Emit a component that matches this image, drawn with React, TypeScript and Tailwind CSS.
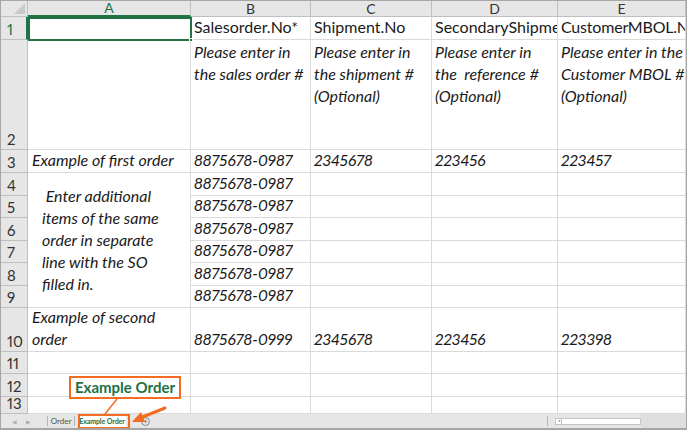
const gridCell = "border-r border-b border-[#dadada] overflow-hidden whitespace-nowrap"
const rowHead = "bg-[#e6e6e6] border-r border-b border-[#bfbfbf] text-[#333] text-[15px] flex items-end pl-[6px] leading-[18px]"
const colHead = "bg-[#e6e6e6] border-r border-b border-[#bfbfbf] text-[#333] text-[14px] flex items-center justify-center leading-none"

const Cell = ({ children, className = "" }: { children?: React.ReactNode; className?: string }) => (
  <div className={`${gridCell} flex items-end pl-[3px] pb-[1px] leading-[22px] ${className}`}>{children}</div>
)

const RowNum = ({ n, active = false }: { n: number; active?: boolean }) => (
  <div className={`${rowHead} ${active ? "bg-[#d2d2d2] text-[#217346] border-r-2 border-r-[#217346]" : ""}`}>
    <span className="pb-[1px]">{n}</span>
  </div>
)

export default function App() {
  const headers = ["B", "C", "D", "E"]
  const fillRows = [4, 5, 6, 7, 8, 9]

  return (
    <div className="relative w-[687px] h-[430px] overflow-hidden bg-white border border-b-2 border-[#a6a6a6] font-['Lato','Liberation_Sans',sans-serif] text-[#1a1a1a] proportional-nums">
      <div className="grid grid-cols-[27px_163px_120px_121px_126px_1fr] grid-rows-[16px_23px_110px_23px_23px_22px_23px_22px_23px_22px_44px_22px_23px_17px] h-[412px]">
        {/* column headers */}
        <div className="bg-[#e6e6e6] border-r border-b border-[#bfbfbf] relative">
          <svg className="absolute right-[2px] bottom-[2px]" width="11" height="11" viewBox="0 0 11 11">
            <polygon points="11,0 11,11 0,11" fill="#c8c8c8" />
          </svg>
        </div>
        <div className={`${colHead} bg-[#d2d2d2] text-[#217346] border-b-2 border-b-[#217346]`}>A</div>
        {headers.map((h) => (
          <div key={h} className={colHead}>{h}</div>
        ))}

        {/* row 1 */}
        <RowNum n={1} active />
        <Cell />
        <Cell>Salesorder.No*</Cell>
        <Cell>Shipment.No</Cell>
        <Cell>SecondaryShipment.No</Cell>
        <Cell className="tracking-[-0.2px]">CustomerMBOL.No</Cell>

        {/* row 2 */}
        <RowNum n={2} />
        <Cell />
        <Cell className="!items-start italic whitespace-normal pt-[1px]">
          <div>Please enter in<br />the sales order #</div>
        </Cell>
        <Cell className="!items-start italic whitespace-normal pt-[1px]">
          <div>Please enter in<br />the shipment #<br />(Optional)</div>
        </Cell>
        <Cell className="!items-start italic whitespace-pre pt-[1px]">
          <div>{"Please enter in\nthe  reference #\n(Optional)"}</div>
        </Cell>
        <Cell className="!items-start italic whitespace-normal pt-[1px]">
          <div>Please enter in the<br />Customer MBOL #<br />(Optional)</div>
        </Cell>

        {/* row 3 */}
        <RowNum n={3} />
        <Cell className="italic pl-[4px]">Example of first order</Cell>
        <Cell className="italic">8875678-0987</Cell>
        <Cell className="italic">2345678</Cell>
        <Cell className="italic">223456</Cell>
        <Cell className="italic">223457</Cell>

        {/* rows 4-9, A merged */}
        {fillRows.map((n, i) => (
          <div key={n} className="contents">
            <RowNum n={n} />
            {i === 0 && (
              <div className="row-span-6 border-r border-b border-[#dadada] flex items-center pl-[14px] italic leading-[22px] whitespace-pre">
                {" Enter additional\nitems of the same\norder in separate\nline with the SO\nfilled in."}
              </div>
            )}
            <Cell className="italic">8875678-0987</Cell>
            <Cell />
            <Cell />
            <Cell />
          </div>
        ))}

        {/* row 10 */}
        <RowNum n={10} />
        <Cell className="italic pl-[4px] whitespace-normal">
          <div>Example of second<br />order</div>
        </Cell>
        <Cell className="italic">8875678-0999</Cell>
        <Cell className="italic">2345678</Cell>
        <Cell className="italic">223456</Cell>
        <Cell className="italic">223398</Cell>

        {[11, 12, 13].map((n) => (
          <div key={n} className="contents">
            <RowNum n={n} />
            <Cell />
            <Cell />
            <Cell />
            <Cell />
            <Cell />
          </div>
        ))}
      </div>

      {/* sheet tabs bar */}
      <div className="h-[15px] bg-[#e6e6e6] border-t border-[#c6c6c6] flex items-center text-[8px] text-[#555] whitespace-nowrap">
        <div className="w-[46px] flex items-center gap-[9px] pl-[11px] text-[#b0b0b0] text-[6px]">
          <span>◀</span>
          <span>▶</span>
        </div>
        <div className="w-px h-[10px] bg-[#b5b5b5]" />
        <div className="w-[26px] text-center">Order</div>
        <div className="w-px h-[10px] bg-[#b5b5b5]" />
        <div className="ml-[3px] w-[48px] h-[13px] bg-white flex items-center justify-center font-bold text-[#217346] text-[7px] tracking-[-0.1px]">
          Example Order
        </div>
        <div className="ml-[15px] w-[9px] h-[9px] rounded-full border border-[#8a8a8a] flex items-center justify-center text-[8px] leading-none text-[#666]">+</div>
        <div className="flex-1" />
        <div className="w-px h-[10px] bg-[#b5b5b5] mr-[7px]" />
        <div className="w-[86px] h-[7px] bg-white border border-[#c4c4c4] flex items-center">
          <div className="w-[6px] h-full border-r border-[#c4c4c4] flex items-center justify-center text-[4px] text-[#777]">◂</div>
        </div>
        <div className="w-[45px] h-full bg-[#dedede]" />
      </div>

      {/* selected cell A1 */}
      <div className="absolute left-[27px] top-[16px] w-[164px] h-[24px] border-2 border-[#217346]">
        <div className="absolute -right-[3px] -bottom-[3px] w-[4px] h-[4px] bg-[#217346] border border-white" />
      </div>

      {/* callout */}
      <div className="absolute left-[68px] top-[375px] w-[112px] h-[23px] bg-white border-2 border-[#f26c22] flex items-center justify-center text-[15px] font-bold text-[#1e7145] leading-none">
        Example Order
      </div>
      <div className="absolute left-[77px] top-[413px] w-[52px] h-[15px] border-2 border-[#f26c22]" />
      <svg className="absolute left-0 top-0 pointer-events-none" width="687" height="430">
        <line x1="116" y1="398" x2="104" y2="413" stroke="#f26c22" strokeWidth="1.5" />
        <line x1="164" y1="407" x2="139" y2="417" stroke="#f26c22" strokeWidth="3" strokeLinecap="round" />
        <polygon points="131,421 140,411 144,421" fill="#f26c22" />
      </svg>
    </div>
  )
}
